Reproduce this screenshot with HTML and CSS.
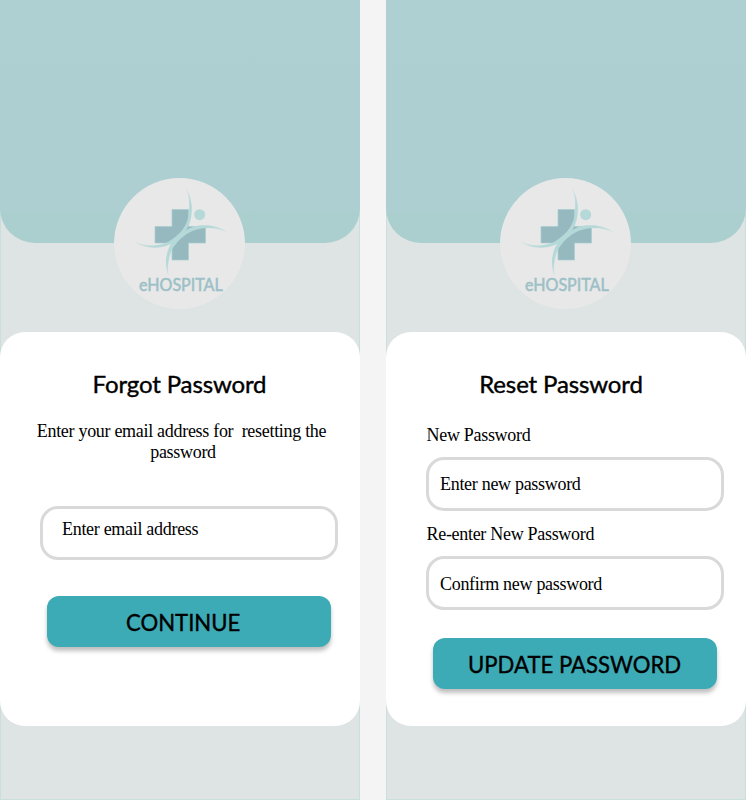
FILE: index.html
```html
<!DOCTYPE html>
<html lang="en">
<head>
<meta charset="utf-8">
<title>eHospital</title>
<link rel="stylesheet" href="styles.css">
</head>
<body>
<svg width="0" height="0" class="defs">
  <radialGradient id="fade" gradientUnits="userSpaceOnUse" cx="181" cy="234" r="52">
    <stop offset="0" stop-color="#b4d9d8"/>
    <stop offset=".6" stop-color="#b4d9d8"/>
    <stop offset="1" stop-color="#b4d9d8" stop-opacity=".1"/>
  </radialGradient>
  <symbol id="logo" viewBox="114 178 131 131">
    <path class="cross" d="M172 209.500h16.500v17h17v16.500h-17v17H172v-17h-17v-16.500h17z"/>
    <circle class="dot" cx="199.700" cy="214.700" r="5.500"/>
    <path class="swoosh" d="M185.500 186.500C191 196 193 206 191.300 216C190 225 187 230.500 180 237C172 245.500 161 249 149 247.300C143 246.500 138 244.500 134.500 241.500C142 245 149 246 156 245.300C166 244.500 172 240 178 234.500C184 229 187.500 223 188.800 214C190 204 189 195 185.500 186.500Z"/>
    <path class="swoosh" d="M230 234C221 226.500 210 224.300 199 225.500C189 227 181 232.500 174 240C166 249 163.500 263 168.500 276.500C167 264 169 252 175.500 244.500C182 236 190 231 199 229C209 227 220 228 230 234Z"/>
  </symbol>
</svg>
<main class="board">
  <section class="screen">
    <header class="banner"></header>
    <div class="brand">
      <svg class="mark"><use href="#logo"/></svg>
      <span class="brand-name">eHOSPITAL</span>
    </div>
    <form class="card forgot">
      <h1>Forgot Password</h1>
      <p class="hint">Enter your email address for&nbsp; resetting the<br><span class="hint-end">password</span></p>
      <div class="field email">Enter email address</div>
      <button type="button"><span class="continue">CONTINUE</span></button>
    </form>
  </section>
  <section class="screen">
    <header class="banner"></header>
    <div class="brand">
      <svg class="mark"><use href="#logo"/></svg>
      <span class="brand-name">eHOSPITAL</span>
    </div>
    <form class="card reset">
      <h1>Reset Password</h1>
      <label>New Password</label>
      <div class="field">Enter new password</div>
      <label>Re-enter New Password</label>
      <div class="field confirm">Confirm new password</div>
      <button type="button"><span class="update">UPDATE PASSWORD</span></button>
    </form>
  </section>
</main>
</body>
</html>
```
FILE: styles.css
```css
* { box-sizing: border-box; }
body { margin: 0; background: #f4f4f4; color: #000; }
.defs { position: absolute; }
.board { display: flex; gap: 26px; width: 746px; height: 800px; }
.screen {
  width: 360px;
  height: 800px;
  background: #dee4e3;
  box-shadow: inset 0 0 0 1px #c8dfdc;
}
.banner {
  height: 243px;
  border-radius: 0 0 35px 35px;
  background: linear-gradient(#afd0d2 0, #adcfd1 211px, #abcecf 212px);
}
.brand {
  position: relative;
  width: 131px;
  height: 131px;
  margin: -65px 0 0 114px;
  border-radius: 50%;
  background: #e8e8e8;
}
.mark { display: block; width: 131px; height: 131px; }
.cross { fill: #96b9c0; stroke: #a8cdd0; stroke-width: .7; }
.dot { fill: #b4d9d8; }
.swoosh { fill: url(#fade); }
.brand-name {
  position: absolute;
  left: 25px;
  top: 97px;
  font: 17px/20px Lato, sans-serif;
  color: #9bc0c6;
  -webkit-text-stroke: .5px #9bc0c6;
  transform: scaleX(.945);
  transform-origin: 0 0;
}
.card {
  height: 394px;
  margin-top: 23px;
  padding-top: 36px;
  border-radius: 25px;
  background: #fff;
  font: 18px/21px "Liberation Serif", serif;
  letter-spacing: -.3px;
}
h1 {
  margin: 0 0 0 -1px;
  font: 24px/32px Lato, sans-serif;
  -webkit-text-stroke: .4px #000;
  text-align: center;
  letter-spacing: -.13px;
}
.hint { margin: 21px 0 0 3px; text-align: center; }
.hint-end { margin-left: 3px; }
.field {
  width: 298px;
  height: 54px;
  margin-left: 40px;
  padding: 14px 0 0 11px;
  border: 3px solid #d9d9d9;
  border-radius: 18px;
}
.email { margin-top: 43px; padding: 10px 0 0 19px; }
.confirm { padding-top: 15px; }
label { display: block; margin-left: 40.5px; }
.reset label { margin-top: 13px; margin-bottom: 11px; }
.reset h1 { padding-right: 9px; margin-bottom: 25px; }
button {
  display: block;
  width: 284px;
  height: 51px;
  margin: 36px 0 0 47px;
  padding: 0;
  border: 0;
  border-radius: 12px;
  background: #3cabb6;
  box-shadow: 0 4px 4px rgba(0, 0, 0, .25);
  color: #000;
  font: 24px/51px Lato, sans-serif;
  -webkit-text-stroke: .4px #000;
  text-align: left;
  white-space: nowrap;
}
.reset button { margin-top: 28px; }
button span { display: inline-block; transform: scaleX(.922); transform-origin: 0 0; }
.continue { margin-left: 79px; }
.update { margin-left: 35px; }
```
